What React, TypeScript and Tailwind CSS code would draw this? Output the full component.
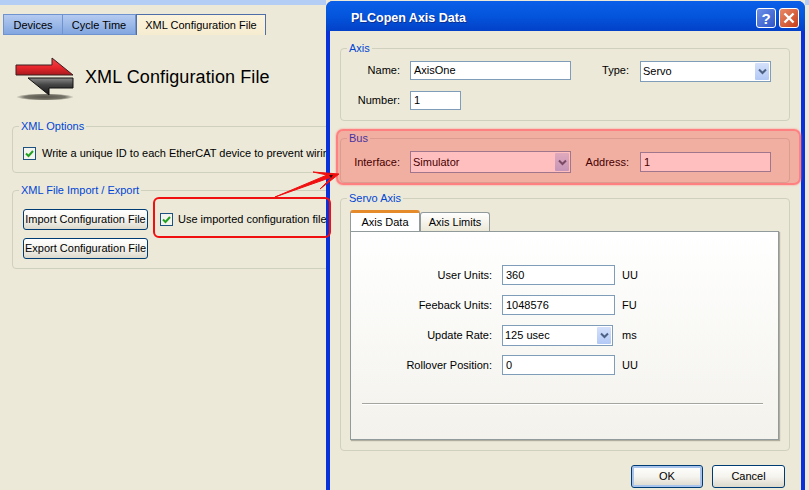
import type { ReactNode } from 'react'

// Windows XP styled group box
function GroupBox({ title, className, children }: { title: string; className: string; children: ReactNode }) {
    return (
        <fieldset className={`border border-[#d0d0bf] rounded-[4px] ${className}`}>
            <legend className="ml-[6px] px-[2px] text-[#0046d5] leading-[13px]">{title}</legend>
            {children}
        </fieldset>
    )
}

function TextBox({ value, className }: { value: string; className: string }) {
    return (
        <div className={`flex items-center border border-[#7f9db9] bg-white pl-[3px] ${className}`}>{value}</div>
    )
}

function ComboBox({ value, className }: { value: string; className: string }) {
    return (
        <div className={`flex items-center justify-between border border-[#7f9db9] bg-white pl-[2px] pr-[1px] ${className}`}>
            <span>{value}</span>
            <span className="flex h-[calc(100%-2px)] w-[14px] items-center justify-center rounded-[1px] bg-gradient-to-b from-[#d5e1fb] to-[#b2c8f6]">
                <svg width="9" height="7" viewBox="0 0 9 7">
                    <path d="M1 1.5 L4.5 5 L8 1.5" fill="none" stroke="#4d6185" strokeWidth="2" />
                </svg>
            </span>
        </div>
    )
}

function XpButton({ label, className }: { label: string; className: string }) {
    return (
        <div className={`flex items-center justify-center whitespace-nowrap rounded-[3px] border border-[#003c74] bg-gradient-to-b from-[#ffffff] via-[#f5f4ee] to-[#dcd8cc] ${className}`}>
            {label}
        </div>
    )
}

function XpCheck({ className }: { className?: string }) {
    return (
        <span className={`flex h-[13px] w-[13px] shrink-0 items-center justify-center border border-[#1c5180] bg-[#f4f4ee] ${className ?? ''}`}>
            <svg width="9" height="9" viewBox="0 0 9 9">
                <path d="M1 4.5 L3.5 7 L8 2" fill="none" stroke="#21a121" strokeWidth="2" />
            </svg>
        </span>
    )
}

function ArrowIcon() {
    return (
        <svg width="60" height="46" viewBox="15 55 60 46" className="shrink-0">
            <defs>
                <linearGradient id="redArrow" x1="0" y1="0" x2="0" y2="1">
                    <stop offset="0" stopColor="#f04a50" />
                    <stop offset="0.55" stopColor="#e8262c" />
                    <stop offset="1" stopColor="#a81a1e" />
                </linearGradient>
                <linearGradient id="darkArrow" x1="0" y1="0" x2="0" y2="1">
                    <stop offset="0" stopColor="#8a8a8a" />
                    <stop offset="0.4" stopColor="#444" />
                    <stop offset="1" stopColor="#151515" />
                </linearGradient>
                <radialGradient id="arrowShadow">
                    <stop offset="0" stopColor="#55534a" />
                    <stop offset="0.7" stopColor="#77756a" />
                    <stop offset="1" stopColor="#ece9d8" />
                </radialGradient>
            </defs>
            <ellipse cx="45" cy="97" rx="29" ry="3.5" fill="url(#arrowShadow)" />
            <path d="M16 65 H52 V58 L73 75 H16 Z" fill="url(#redArrow)" stroke="#3b2020" strokeWidth="1" />
            <path d="M28 78 H73 V88 H49 V95 Z" fill="url(#darkArrow)" stroke="#111" strokeWidth="1" />
        </svg>
    )
}

export default function App() {
    return (
        <div className="relative flex h-[490px] w-[809px] overflow-hidden bg-[#ece9d8] text-[11px] text-black [font-family:'Liberation_Sans',sans-serif]">
            {/* 背面のウィンドウ */}
            <div className="w-[326px] shrink-0 overflow-hidden">
                <div className="h-[5px] bg-[#b4cdf5]" />
                <div className="mt-[9px] flex h-[21px] pl-[3px]">
                    <div className="flex w-[60px] items-center justify-center border border-[#6f93cf] bg-gradient-to-b from-[#b5cbf0] to-[#82a6e0] pt-[2px]">Devices</div>
                    <div className="flex w-[73px] items-center justify-center border border-l-0 border-[#6f93cf] bg-gradient-to-b from-[#b5cbf0] to-[#82a6e0] pt-[2px]">Cycle Time</div>
                    <div className="flex w-[130px] items-center justify-center border border-b-0 border-[#4f6ea8] bg-gradient-to-b from-[#fbf3dc] to-[#f6ecd0] pt-[1px]">XML Configuration File</div>
                </div>
                <div className="mt-[20px] flex h-[46px] items-center gap-[10px] pl-[15px]">
                    <ArrowIcon />
                    <span className="whitespace-nowrap pb-[2px] text-[18px] tracking-[0.1px]">XML Configuration File</span>
                </div>
                <GroupBox title="XML Options" className="ml-[12px] mt-[19px] h-[53px] w-[340px]">
                    <div className="flex items-center gap-[6px] pl-[10px] pt-[12px] whitespace-nowrap">
                        <XpCheck />
                        <span>Write a unique ID to each EtherCAT device to prevent wiring errors</span>
                    </div>
                </GroupBox>
                <GroupBox title="XML File Import / Export" className="ml-[12px] mt-[11px] h-[85px] w-[340px]">
                    <div className="flex gap-[12px] pl-[10px] pt-[12px]">
                        <div className="flex flex-col gap-[8px]">
                            <XpButton label="Import Configuration File" className="h-[21px] w-[125px]" />
                            <XpButton label="Export Configuration File" className="h-[21px] w-[125px]" />
                        </div>
                        <div className="flex h-[21px] items-center gap-[5px] whitespace-nowrap">
                            <XpCheck />
                            <span>Use imported configuration file</span>
                        </div>
                    </div>
                </GroupBox>
            </div>

            {/* PLCopen Axis Data ダイアログ */}
            <div className="mt-[1px] flex h-[520px] w-[479px] shrink-0 flex-col rounded-t-[7px] bg-[#0831d9]">
                <div className="flex h-[30px] shrink-0 items-center justify-between rounded-t-[7px] bg-gradient-to-b from-[#0a5fe8] via-[#0455dc] to-[#0340c8] pl-[25px] pr-[6px] pt-[4px]">
                    <span className="text-[12.5px] font-bold text-white [text-shadow:1px_1px_0_#0f2f90]">PLCopen Axis Data</span>
                    <div className="flex gap-[3px]">
                        <div className="flex h-[20px] w-[20px] items-center justify-center rounded-[3px] border border-white bg-gradient-to-br from-[#6d8fe8] to-[#2f55c8] text-[15px] font-bold leading-none text-white">?</div>
                        <div className="flex h-[20px] w-[20px] items-center justify-center rounded-[3px] border border-white bg-gradient-to-br from-[#e88a68] to-[#c63c14]">
                            <svg width="12" height="12" viewBox="0 0 12 12">
                                <path d="M1.5 1.5 L10.5 10.5 M10.5 1.5 L1.5 10.5" stroke="#fff" strokeWidth="2.4" />
                            </svg>
                        </div>
                    </div>
                </div>
                <div className="mx-[4px] flex-1 bg-[#ece9d8] pt-[11px]">
                    <GroupBox title="Axis" className="ml-[10px] h-[79px] w-[450px]">
                        <div className="mt-[6px] flex items-start">
                            <span className="flex h-[19px] w-[59px] items-center justify-end">Name:</span>
                            <TextBox value="AxisOne" className="ml-[10px] h-[19px] w-[161px]" />
                            <span className="flex h-[19px] w-[58px] items-center justify-end">Type:</span>
                            <ComboBox value="Servo" className="ml-[11px] h-[21px] w-[131px]" />
                        </div>
                        <div className="mt-[9px] flex items-center">
                            <span className="w-[59px] text-right">Number:</span>
                            <TextBox value="1" className="ml-[10px] h-[19px] w-[51px]" />
                        </div>
                    </GroupBox>
                    <GroupBox title="Bus" className="ml-[10px] mt-[11px] h-[51px] w-[450px]">
                        <div className="flex items-center pt-[6px]">
                            <span className="w-[59px] text-right">Interface:</span>
                            <ComboBox value="Simulator" className="ml-[10px] h-[22px] w-[161px]" />
                            <span className="w-[58px] text-right">Address:</span>
                            <TextBox value="1" className="ml-[11px] h-[20px] w-[131px]" />
                        </div>
                    </GroupBox>
                    <GroupBox title="Servo Axis" className="ml-[10px] mt-[9px] h-[259px] w-[450px]">
                        <div className="px-[9px] pt-[5px]">
                            <div className="flex items-end">
                                <div className="flex h-[21px] w-[70px] items-center justify-center rounded-t-[3px] border-x border-t-[3px] border-x-[#919b9c] border-t-[#e68b2c] bg-white">Axis Data</div>
                                <div className="flex h-[19px] w-[70px] items-center justify-center rounded-t-[3px] border border-b-0 border-[#919b9c] bg-gradient-to-b from-white to-[#ece9d8]">Axis Limits</div>
                            </div>
                            <div className="h-[209px] w-[429px] border border-[#919b9c] bg-gradient-to-b from-white to-[#f3f2ec] pt-[33px] shadow-[1px_1px_1px_#b0ae9e]">
                                <div className="flex flex-col gap-[10px]">
                                    <div className="flex h-[20px] items-center">
                                        <span className="w-[141px] text-right">User Units:</span>
                                        <TextBox value="360" className="ml-[10px] h-[20px] w-[113px]" />
                                        <span className="ml-[7px]">UU</span>
                                    </div>
                                    <div className="flex h-[20px] items-center">
                                        <span className="w-[141px] text-right">Feeback Units:</span>
                                        <TextBox value="1048576" className="ml-[10px] h-[20px] w-[113px]" />
                                        <span className="ml-[7px]">FU</span>
                                    </div>
                                    <div className="flex h-[20px] items-center">
                                        <span className="w-[141px] text-right">Update Rate:</span>
                                        <ComboBox value="125 usec" className="ml-[10px] h-[21px] w-[111px]" />
                                        <span className="ml-[9px]">ms</span>
                                    </div>
                                    <div className="flex h-[20px] items-center">
                                        <span className="w-[141px] text-right">Rollover Position:</span>
                                        <TextBox value="0" className="ml-[10px] h-[20px] w-[113px]" />
                                        <span className="ml-[7px]">UU</span>
                                    </div>
                                </div>
                                <div className="ml-[11px] mt-[28px] h-[2px] w-[401px] border-t border-[#a5a5a0] bg-white" />
                            </div>
                        </div>
                    </GroupBox>
                    <div className="mt-[14px] flex justify-end gap-[9px] pr-[16px]">
                        <XpButton label="OK" className="h-[23px] w-[72px] shadow-[inset_0_0_0_2px_#a9c4ec]" />
                        <XpButton label="Cancel" className="h-[23px] w-[73px]" />
                    </div>
                </div>
            </div>
            <div className="flex-1">
                <div className="h-[5px] bg-[#b4cdf5]" />
            </div>

            {/* 注釈: 赤い枠と矢印 */}
            <div className="absolute left-[153px] top-[197px] h-[41px] w-[178px] rounded-[6px] border-2 border-[#f01010]" />
            <div className="absolute left-[336px] top-[129px] h-[56px] w-[465px] rounded-[7px] border-2 border-[#ff8080] bg-[#ff0000]/25 shadow-[0_0_2px_#ff8080]" />
            <svg className="absolute left-[270px] top-[165px]" width="70" height="40" viewBox="270 165 70 40">
                <path d="M275 197 L332 177 L320 189 L339 174 L313 172 L327 175 Z" fill="#f01010" stroke="#f01010" strokeWidth="1" />
                <path d="M329 175 L333 175 L331 178 Z" fill="#301010" />
            </svg>
        </div>
    )
}
